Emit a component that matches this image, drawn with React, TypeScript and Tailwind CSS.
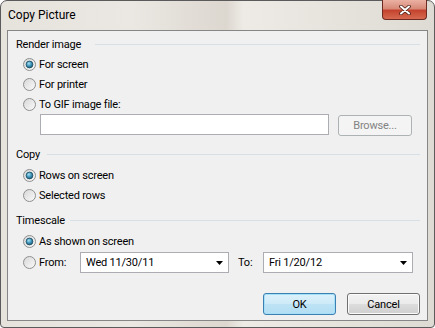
import React from "react";

const Radio: React.FC<{ checked?: boolean }> = ({ checked }) => (
  <svg width="13" height="13" viewBox="0 0 13 13" className="shrink-0">
    <defs>
      <linearGradient id="rbFill" x1="0" y1="0" x2="1" y2="1">
        <stop offset="0" stopColor="#d6d6d6" />
        <stop offset="1" stopColor="#fbfbfb" />
      </linearGradient>
      <radialGradient id="rbDot" cx="0.4" cy="0.35" r="0.75">
        <stop offset="0" stopColor="#a6e3f6" />
        <stop offset="0.5" stopColor="#3c93b8" />
        <stop offset="1" stopColor="#1a4f66" />
      </radialGradient>
    </defs>
    <circle cx="6.5" cy="6.5" r="6" fill="url(#rbFill)" stroke="#8e8f8f" />
    {checked && <circle cx="6.5" cy="6.5" r="3.4" fill="url(#rbDot)" stroke="#1d4a5e" strokeWidth="0.8" />}
  </svg>
);

const RadioRow: React.FC<{ label: string; checked?: boolean }> = ({ label, checked }) => (
  <div className="flex items-center h-[20px] pl-[7px] gap-[3px]">
    <Radio checked={checked} />
    <span>{label}</span>
  </div>
);

const GroupHeader: React.FC<{ label: string; width: string }> = ({ label, width }) => (
  <div className="flex items-center h-[15px] pr-[7px]">
    <span className={width}>{label}</span>
    <div className="flex-1 h-px bg-[#d5dfe5]" />
  </div>
);

const Combo: React.FC<{ value: string; width: string }> = ({ value, width }) => (
  <div className={`${width} h-[21px] flex items-center justify-between bg-white border border-[#abadb3] pl-[5px] pr-[5px]`}>
    <span>{value}</span>
    <svg width="7" height="4" viewBox="0 0 7 4">
      <path d="M0 0h7L3.5 4z" fill="#000" />
    </svg>
  </div>
);

export default function App() {
  return (
    <div className="w-[435px] h-[328px] bg-white font-[family-name:Roboto,sans-serif] text-black">
      <div className="w-[435px] h-[328px] flex flex-col rounded-t-[7px] rounded-b-[4px] border border-[#5b5b5b] bg-[linear-gradient(90deg,#e6e2dc_0%,#ebe8e3_30%,#dcd7cf_52%,#eeebe6_56%,#e6e2dc_78%,#dedad4_100%)]">
        {/* title bar */}
        <div className="h-[29px] flex justify-between items-start shrink-0">
          <span className="pl-[7px] pt-[7px] text-[12px] leading-[15px]">Copy Picture</span>
          <div className="-mt-px mr-[7px] w-[45px] h-[20px] flex items-center justify-center rounded-b-[4px] border border-t-0 border-[#6e2a20] bg-[linear-gradient(#eab1a3_0%,#d88a78_45%,#c4432e_55%,#d66a50_100%)]">
            <svg width="12" height="10" viewBox="0 0 12 10">
              <path d="M2 1.5l8 7M10 1.5l-8 7" stroke="#4a1e16" strokeWidth="3.6" strokeLinecap="round" />
              <path d="M2 1.5l8 7M10 1.5l-8 7" stroke="#fff" strokeWidth="2" strokeLinecap="round" />
            </svg>
          </div>
        </div>

        {/* client area */}
        <div className="mx-[6px] h-[291px] border border-[#868686] bg-[#f0f0f0] text-[11px] leading-[15px] tracking-[-0.2px] pl-[8px] pt-[6px] flex flex-col">
          <GroupHeader label="Render image" width="w-[79px]" />
          <div className="mt-[2px] flex flex-col">
            <RadioRow label="For screen" checked />
            <RadioRow label="For printer" />
            <RadioRow label="To GIF image file:" />
          </div>
          <div className="flex items-start">
            <div className="ml-[24px] w-[289px] h-[21px] bg-white border border-[#abadb3]" />
            <div className="ml-[9px] mt-px w-[74px] h-[21px] flex items-center justify-center rounded-[3px] border border-[#adb2b5] bg-[#f4f4f4] text-[#838383]">
              Browse...
            </div>
          </div>

          <div className="mt-[11px]">
            <GroupHeader label="Copy" width="w-[31px]" />
          </div>
          <div className="mt-[3px] flex flex-col">
            <RadioRow label="Rows on screen" checked />
            <RadioRow label="Selected rows" />
          </div>

          <div className="mt-[8px]">
            <GroupHeader label="Timescale" width="w-[54px]" />
          </div>
          <div className="mt-[3px]">
            <RadioRow label="As shown on screen" checked />
          </div>
          <div className="mt-px flex items-center pl-[7px]">
            <Radio />
            <span className="ml-[3px] w-[41px]">From:</span>
            <Combo value="Wed 11/30/11" width="w-[149px]" />
            <span className="ml-[9px] w-[25px]">To:</span>
            <Combo value="Fri 1/20/12" width="w-[150px]" />
          </div>

          <div className="mt-[20px] flex justify-end gap-[11px] pr-[7px]">
            <div className="w-[73px] h-[22px] flex items-center justify-center rounded-[3px] border border-[#3c7fb1] bg-[linear-gradient(#dcf1fb_0%,#cdeaf8_50%,#bde3f5_50%,#b3def3_100%)] shadow-[inset_0_0_0_1px_#a6e0f8]">
              OK
            </div>
            <div className="w-[73px] h-[22px] flex items-center justify-center rounded-[3px] border border-[#707070] bg-[linear-gradient(#f2f2f2_0%,#ebebeb_50%,#dddddd_50%,#cfcfcf_100%)] shadow-[inset_0_0_0_1px_#fbfbfb]">
              Cancel
            </div>
          </div>
        </div>
      </div>
    </div>
  );
}
